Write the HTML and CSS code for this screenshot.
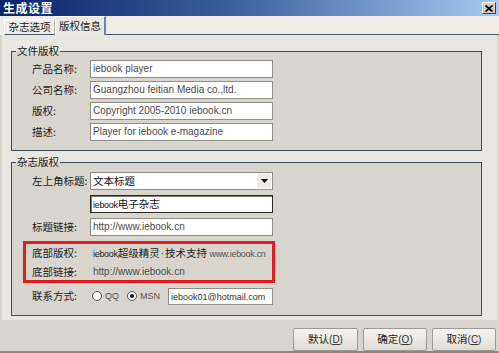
FILE: index.html
```html
<!DOCTYPE html>
<html lang="zh-CN">
<head>
<meta charset="utf-8">
<title>生成设置</title>
<link rel="stylesheet" href="styles.css">
</head>
<body>
<div class="window">
  <div class="titlebar">
    <span class="title">生成设置</span>
    <span class="close"><svg width="8" height="7" viewBox="0 0 8 7"><path d="M0.5 0.5 L7.5 6.5 M7.5 0.5 L0.5 6.5" stroke="#000" stroke-width="1.8" fill="none"/></svg></span>
  </div>
  <div class="tabs">
    <div class="tab">杂志选项</div>
    <div class="tab active">版权信息</div>
    <div class="tab-fill"></div>
  </div>
  <div class="panel">
    <fieldset class="group g1">
      <legend>文件版权</legend>
      <div class="row"><span class="label">产品名称:</span><div class="field">iebook player</div></div>
      <div class="row"><span class="label">公司名称:</span><div class="field">Guangzhou feitian Media co.,ltd.</div></div>
      <div class="row"><span class="label">版权:</span><div class="field">Copyright 2005-2010 iebook.cn</div></div>
      <div class="row"><span class="label">描述:</span><div class="field">Player for iebook e-magazine</div></div>
    </fieldset>
    <fieldset class="group g2">
      <legend>杂志版权</legend>
      <div class="row r-dd"><span class="label">左上角标题:</span><div class="field select"><span class="cjk">文本标题</span><span class="arrow"><svg width="7" height="4" viewBox="0 0 7 4"><path d="M0 0 H7 L3.5 4 Z" fill="#000"/></svg></span></div></div>
      <div class="row r-gap"><span class="label"></span><div class="field focus"><span class="lat-narrow">iebook</span><span class="cjk">电子杂志</span></div></div>
      <div class="row r-gap"><span class="label">标题链接:</span><div class="field">http://www.iebook.cn</div></div>
      <div class="highlight">
        <div class="row r-static"><span class="label">底部版权:</span><span class="value"><span class="lat-narrow">iebook</span>超级精灵<span class="dot">·</span>技术支持 <span class="lat-narrow grey">www.iebook.cn</span></span></div>
        <div class="row r-static r-second"><span class="label">底部链接:</span><span class="value link">http://www.iebook.cn</span></div>
      </div>
      <div class="row r-contact"><span class="label">联系方式:</span>
        <div class="controls">
          <span class="radio"></span><span class="opt">QQ</span>
          <span class="radio checked"></span><span class="opt">MSN</span>
          <div class="field email">iebook01@hotmail.com</div>
        </div>
      </div>
    </fieldset>
  </div>
  <div class="buttons">
    <button class="btn wide">默认<span class="lat">(<u>D</u>)</span></button>
    <button class="btn">确定<span class="lat">(<u>O</u>)</span></button>
    <button class="btn">取消<span class="lat">(<u>C</u>)</span></button>
  </div>
</div>
</body>
</html>
```

FILE: styles.css
```css
html, body {
  margin: 0;
  padding: 0;
}
body {
  width: 499px;
  height: 353px;
  overflow: hidden;
  background: #d8d5ce;
  font-family: "Noto Sans CJK SC", sans-serif;
  color: #1c1c1c;
}
.window {
  width: 499px;
  height: 353px;
  display: flex;
  flex-direction: column;
  box-sizing: border-box;
  border-bottom: 2px solid #8a8780;
}
.titlebar {
  height: 16px;
  flex: none;
  background: linear-gradient(to right, #0a246a 0%, #3a5c9c 45%, #a6caf0 100%);
  display: flex;
  align-items: center;
  justify-content: space-between;
  padding: 0 3px 0 3px;
}
.title {
  color: #fff;
  font-weight: bold;
  font-size: 12px;
  line-height: 16px;
  letter-spacing: 0.5px;
}
.close {
  width: 14px;
  height: 12px;
  box-sizing: border-box;
  background: #d4d0c8;
  border: 1px solid;
  border-color: #fff #404040 #404040 #fff;
  display: flex;
  align-items: center;
  justify-content: center;
}
.tabs {
  height: 19px;
  flex: none;
  display: flex;
  align-items: flex-end;
  background: #efede8;
  padding-left: 4px;
}
.tab {
  width: 51px;
  height: 16px;
  box-sizing: border-box;
  border-top: 1px solid #fff;
  border-left: 1px solid #fff;
  border-right: 1px solid #b4b1aa;
  border-bottom: 1px solid #4a5272;
  font-size: 10.5px;
  line-height: 14px;
  text-align: center;
  color: #1c1c1c;
}
.tab.active {
  width: 51px;
  height: 19px;
  border-right: 2px solid #7081aa;
  border-bottom: none;
  background: #ebe9e3;
  line-height: 17px;
}
.tab-fill {
  flex: 1;
  height: 1px;
  background: #4a5272;
}
.panel {
  height: 285px;
  flex: none;
  margin: 0 2px;
  background: #e9e7e1;
  padding: 9px 15px 0 9px;
  box-sizing: border-box;
  display: flex;
  flex-direction: column;
}
.group {
  margin: 0;
  border: 1px solid #3f4865;
  background: #d8d5ce;
  padding: 2px 0 9px 0;
  min-width: 0;
  display: flex;
  flex-direction: column;
}
.group legend {
  font-size: 10.5px;
  line-height: 14px;
  padding: 0 1px;
  margin-left: 4px;
  color: #1c1c1c;
}
.group > .row {
  margin-left: 20px;
}
.g1 .row + .row {
  margin-top: 3px;
}
.g2 {
  margin-top: 4px;
  padding-top: 3px;
  padding-bottom: 10px;
}
.row {
  display: flex;
  align-items: center;
  height: 18px;
}
.label {
  width: 58px;
  flex: none;
  font-size: 10.5px;
  line-height: 14px;
  color: #1c1c1c;
}
.field {
  width: 183px;
  height: 18px;
  flex: none;
  box-sizing: border-box;
  background: #fff;
  border: 1px solid #8f8d88;
  font-family: "Liberation Sans", Arial, sans-serif;
  font-size: 10px;
  line-height: 16px;
  color: #4a4a4a;
  padding-left: 2px;
  white-space: nowrap;
  overflow: hidden;
}
.cjk {
  font-family: "Noto Sans CJK SC", sans-serif;
  font-size: 10.5px;
  color: #111;
}
.lat-narrow {
  font-family: "Liberation Sans", Arial, sans-serif;
  font-size: 9px;
  letter-spacing: -0.3px;
}
.select {
  display: flex;
  align-items: center;
  justify-content: space-between;
  padding-right: 1px;
}
.arrow {
  width: 14px;
  height: 14px;
  background: #eeece8;
  display: flex;
  align-items: center;
  justify-content: center;
}
.focus {
  border: 1px solid #2a2a2a;
  box-shadow: inset 1px 1px 0 #7a7a7a;
  color: #111;
}
.r-gap {
  margin-top: 5px;
}
.highlight {
  margin-top: 5px;
  margin-left: 11px;
  width: 252px;
  box-sizing: border-box;
  border: 3px solid #e21d22;
  padding: 1px 0 0 6px;
  display: flex;
  flex-direction: column;
}
.r-static {
  height: 16px;
}
.r-second {
  margin-top: 3px;
}
.value {
  margin-left: 3px;
  font-size: 10.5px;
  line-height: 14px;
  white-space: nowrap;
  color: #1c1c1c;
}
.dot {
  font-family: "Liberation Sans", Arial, sans-serif;
  font-size: 10px;
  margin: 0 1px;
}
.grey {
  color: #555;
}
.link {
  font-family: "Liberation Sans", Arial, sans-serif;
  font-size: 10px;
  color: #4a4a4a;
}
.r-contact {
  margin-top: 4px;
}
.controls {
  width: 183px;
  display: flex;
  align-items: center;
}
.radio {
  width: 10px;
  height: 10px;
  box-sizing: border-box;
  border-radius: 50%;
  border: 1px solid #555;
  background: #fff;
  margin-left: 2px;
  flex: none;
  display: flex;
  align-items: center;
  justify-content: center;
}
.radio.checked {
  margin-left: 8px;
}
.radio.checked::after {
  content: "";
  width: 4px;
  height: 4px;
  border-radius: 50%;
  background: #111;
}
.opt {
  margin-left: 3px;
  font-family: "Liberation Sans", Arial, sans-serif;
  font-size: 9px;
  color: #555;
}
.email {
  width: 105px;
  height: 17px;
  margin-left: auto;
  color: #333;
  font-size: 9px;
}
.buttons {
  flex: 1;
  display: flex;
  justify-content: flex-end;
  align-items: flex-start;
  gap: 5px;
  padding: 8px 3px 0 0;
}
.btn {
  width: 64px;
  height: 23px;
  box-sizing: border-box;
  border: 1px solid #9c9a94;
  border-radius: 2px;
  background: linear-gradient(#f7f6f2, #dedbd3);
  font-family: "Noto Sans CJK SC", sans-serif;
  font-size: 10.5px;
  line-height: 14px;
  color: #1c1c1c;
  padding: 0;
}
.btn.wide {
  width: 65px;
}
.btn .lat {
  font-family: "Liberation Sans", Arial, sans-serif;
  font-size: 10px;
  color: #333;
}
```
